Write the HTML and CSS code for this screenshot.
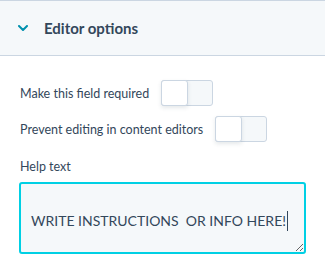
FILE: index.html
```html
<!DOCTYPE html>
<html lang="en">
<head>
    <meta charset="UTF-8">
    <title>Editor options</title>
    <link rel="stylesheet" href="styles.css">
</head>
<body>
    <div class="panel">
        <div class="panel-header">
            <svg class="chevron" width="10" height="6" viewBox="0 0 10 6">
                <path d="M1 1 L5 5 L9 1" fill="none" stroke="#0091ae" stroke-width="2" stroke-linecap="round" stroke-linejoin="round"/>
            </svg>
            <span class="panel-title">Editor options</span>
        </div>
        <div class="panel-body">
            <div class="option-row">
                <span class="option-label">Make this field required</span>
                <div class="toggle"><div class="toggle-knob"></div></div>
            </div>
            <div class="option-row">
                <span class="option-label">Prevent editing in content editors</span>
                <div class="toggle"><div class="toggle-knob"></div></div>
            </div>
            <label class="field-label">Help text</label>
            <div class="help-input"><span class="help-value">WRITE INSTRUCTIONS  OR INFO HERE!</span><span class="caret"></span></div>
        </div>
    </div>
</body>
</html>
```

FILE: styles.css
```css
body {
    margin: 0;
    background: #fff;
    font-family: Lato, "Open Sans", sans-serif;
    color: #33475b;
}

.panel-header {
    display: flex;
    align-items: center;
    height: 54px;
    padding-left: 18px;
    background: #f5f8fa;
    border-top: 1px solid #cbd6e2;
    border-bottom: 1px solid #cbd6e2;
}

.chevron {
    margin-right: 16px;
}

.panel-title {
    font-size: 15px;
    font-weight: 700;
}

.panel-body {
    padding: 24px 0 0 20px;
}

.option-row {
    display: flex;
    align-items: center;
    gap: 12px;
    margin-bottom: 10px;
}

.option-label,
.field-label {
    font-size: 12.5px;
}

.toggle {
    display: flex;
    width: 52px;
    height: 26px;
    box-sizing: border-box;
    background: #f5f8fa;
    border: 1px solid #cbd6e2;
    border-radius: 3px;
}

.toggle-knob {
    width: 27px;
    height: 26px;
    margin: -1px 0 0 -1px;
    box-sizing: border-box;
    background: #fff;
    border: 1px solid #cbd6e2;
    border-radius: 3px;
    box-shadow: 0 2px 4px rgba(45, 62, 80, 0.12);
}

.field-label {
    display: block;
    margin-top: 16px;
    line-height: 18px;
}

.help-input {
    width: 287px;
    height: 72px;
    margin-top: 6px;
    margin-left: -1px;
    box-sizing: border-box;
    padding: 27px 10px 0;
    background: #f5f8fa;
    border: 2px solid #00d0e4;
    border-radius: 3px;
    font-size: 14px;
    line-height: 20px;
    white-space: pre;
    overflow: hidden;
    resize: vertical;
}

.caret {
    display: inline-block;
    width: 1px;
    height: 20px;
    margin-left: 1px;
    vertical-align: top;
    background: #33475b;
}
```
